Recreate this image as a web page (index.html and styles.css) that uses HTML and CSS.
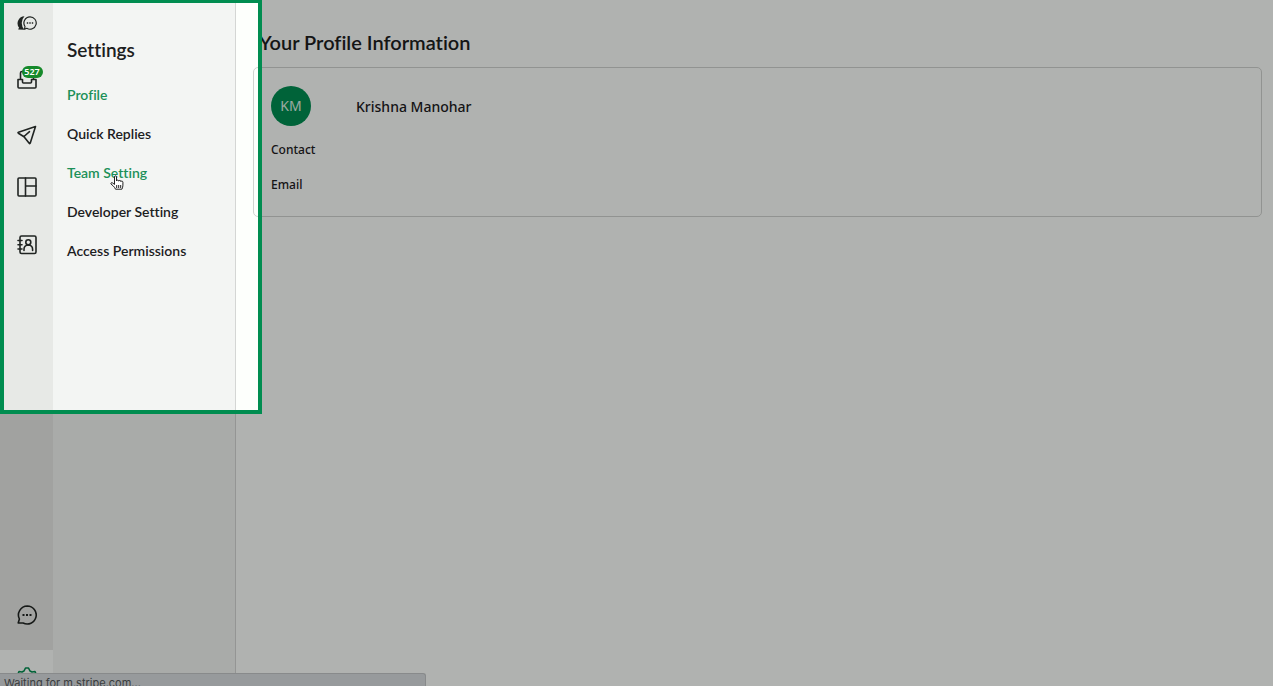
FILE: index.html
```html
<!DOCTYPE html>
<html lang="en">
<head>
<meta charset="utf-8">
<meta name="viewport" content="width=device-width, initial-scale=1">
<title>Settings</title>
<link rel="stylesheet" href="styles.css">
</head>
<body>
<div class="app">
  <nav class="rail" aria-label="Main">
    <a class="rail-link rail-logo" href="#" aria-label="Home">
      <svg class="icon" viewBox="0 0 20 20"><path d="M7.500 3.300A7 7 0 0 0 2 14.500L1.200 16.600 7.500 16.700A9.500 9.500 0 0 1 7.500 3.300Z" fill="#202422" stroke="none"/><path d="M13 3.800a6.200 6.200 0 1 1-3.200 11.500l-2.300.9.500-2.700A6.200 6.200 0 0 1 13 3.800Z" stroke-width="1.200"/><path d="M9.800 10h1.400M12.300 10h1.400M14.800 10h1.400" stroke-width="1.400" stroke-linecap="butt"/></svg>
    </a>
    <a class="rail-link rail-inbox" href="#" aria-label="Inbox">
      <svg class="icon" viewBox="0 0 20 20"><path d="M3.500 9.500V4q0-1.500 1.500-1.500h10q1.500 0 1.500 1.500v5.500M1 10.500h4.500v2.500q0 1 1 1h7q1 0 1-1v-2.500H19v7.500q0 1-1 1H2q-1 0-1-1Z"/></svg>
      <span class="badge">527</span>
    </a>
    <a class="rail-link rail-send" href="#" aria-label="Campaigns">
      <svg class="icon" viewBox="0 0 20 20"><path d="M18.500 1.500 1.500 7.200q-1 .4-.1 1l5.600 3.500L12.200 18.300q.6.700 1-.1ZM7 11.500l5.500-4.800"/></svg>
    </a>
    <a class="rail-link rail-board" href="#" aria-label="Board">
      <svg class="icon" viewBox="0 0 20 20"><rect x="1" y="1" width="18" height="18" rx="1"/><path d="M8.500 1v18M8.500 9H19"/></svg>
    </a>
    <a class="rail-link rail-contacts" href="#" aria-label="Contacts">
      <svg class="icon" viewBox="0 0 20 20"><rect x="3" y="1" width="16" height="17.500" rx="1.500"/><circle cx="11.300" cy="7.200" r="2.500"/><path d="M7 15.500v-1.300q0-3.800 4.300-4.200 4.300.4 4.300 4.200v1.300M1 5.500h4M1 9.800h4M1 14h4"/></svg>
    </a>
    <a class="rail-link rail-chat" href="#" aria-label="Chat">
      <svg class="icon" viewBox="0 0 20 20"><path d="M10.300 1a9 9 0 1 1-4.200 17H1.200l1.200-4A9 9 0 0 1 10.300 1Z"/><path d="M5.500 10h2M9 10h2M12.500 10h2" stroke-width="2" stroke-linecap="butt"/></svg>
    </a>
    <a class="rail-link rail-settings" href="#" aria-label="Settings">
      <svg class="icon" viewBox="0 0 20 20"><path d="M8.500 1h3l1.500 3 2 1 3-.5L19.500 8l-2 2 2 3-1.500 3-3-.5-2.500 1.500-1 2.500h-3L7.500 17 5 15.500l-3 .5L.5 13l2-3-2-2L2 4.500 5 5l2-1Z"/></svg>
    </a>
  </nav>

  <aside class="panel">
    <h1 class="panel-title">Settings</h1>
    <ul class="menu">
      <li><a class="menu-link active" href="#">Profile</a></li>
      <li><a class="menu-link" href="#">Quick Replies</a></li>
      <li><a class="menu-link active hovered" href="#">Team Setting
        <svg class="cursor" viewBox="0 0 14 16" aria-hidden="true"><path d="M4.500 9.500V2q0-1.200 1-1.200t1 1.200v4q.2-1 1.200-.9 1 .1 1 1.100.2-.9 1.200-.8t1 1.200q.2-.7 1-.6t1 1.200v3q0 2-1 4H5.500q-.8-2-2.500-3.500L1 9q-.5-1 .5-1.300t3 1.800Z"/><path d="M6.700 10v3M8.700 10v3M10.700 10v3"/></svg>
      </a></li>
      <li><a class="menu-link" href="#">Developer Setting</a></li>
      <li><a class="menu-link" href="#">Access Permissions</a></li>
    </ul>
  </aside>

  <main class="main">
    <h2 class="main-title">Your Profile Information</h2>
    <section class="card">
      <div class="person">
        <span class="avatar">KM</span>
        <span class="person-name">Krishna Manohar</span>
      </div>
      <p class="field">Contact</p>
      <p class="field">Email</p>
    </section>
  </main>

  <div class="status">Waiting for m.stripe.com...</div>
  <div class="spotlight"></div>
</div>
</body>
</html>
```
FILE: styles.css
```css
* {
  box-sizing: border-box;
}

body {
  margin: 0;
  background: #fdfffc;
  color: #1c201e;
  font-family: "Noto Sans", sans-serif;
  font-variant-ligatures: none;
}

.app {
  position: relative;
  display: flex;
  height: 100vh;
  overflow: hidden;
}

.rail {
  display: flex;
  flex: 0 0 53px;
  flex-direction: column;
  align-items: center;
  padding-top: 13px;
  background: #e7e9e6;
}

.rail-link {
  position: relative;
  display: block;
  flex: none;
  height: 20px;
  margin-bottom: 36px;
  color: #202422;
}

.icon {
  display: block;
  width: 20px;
  height: 20px;
  fill: none;
  stroke: currentColor;
  stroke-width: 1.6;
  stroke-linecap: round;
  stroke-linejoin: round;
}

.rail-send {
  margin-bottom: 32px;
}

.rail-board {
  margin-bottom: 38px;
}

.rail-chat {
  margin-top: auto;
  margin-bottom: 25px;
}

.rail-settings {
  display: flex;
  justify-content: center;
  width: 100%;
  height: 36px;
  margin: 0;
  padding-top: 17px;
  background: #fdfffc;
  color: #008d50;
}

.badge {
  position: absolute;
  top: -3px;
  left: 5px;
  width: 21px;
  border-radius: 6px;
  background: #15892a;
  color: #fff;
  font-size: 9px;
  font-weight: 600;
  line-height: 12px;
  text-align: center;
}

.panel {
  flex: 0 0 183px;
  padding: 37px 14px;
  border-right: 1px solid #d4d6d4;
  background: #f3f5f3;
  font-family: Lato, sans-serif;
}

.panel-title {
  margin: 0 0 26px;
  font-size: 19px;
  font-weight: 600;
  line-height: 25px;
}

.menu {
  display: grid;
  gap: 25px;
  margin: 0;
  padding: 0;
  list-style: none;
}

.menu-link {
  position: relative;
  display: block;
  color: inherit;
  font-size: 14px;
  font-weight: 600;
  line-height: 14px;
  text-decoration: none;
}

.active {
  color: #1b9058;
}

.hovered {
  cursor: pointer;
}

.cursor {
  position: absolute;
  top: 9px;
  left: 43px;
  width: 14px;
  height: 16px;
  fill: #fff;
  stroke: #222;
  stroke-width: 1;
}

.main {
  flex: 1;
  min-width: 0;
  padding: 29px 11px 30px 17px;
}

.main-title {
  margin: 0 0 12px 6px;
  font-family: Lato, sans-serif;
  font-size: 20px;
  font-weight: 600;
  line-height: 26px;
}

.card {
  padding: 18px 17px 21px;
  border: 1px solid #d0d3d0;
  border-radius: 5px;
}

.person {
  display: flex;
  align-items: center;
  gap: 45px;
  margin-bottom: 14px;
}

.avatar {
  width: 40px;
  border-radius: 50%;
  background: #008f52;
  color: #dff2e8;
  font-size: 14px;
  line-height: 40px;
  text-align: center;
}

.person-name {
  font-size: 14px;
  font-weight: 500;
}

.field {
  margin: 0 0 15px;
  font-size: 12px;
  font-weight: 500;
  line-height: 20px;
}

.field:last-child {
  margin-bottom: 0;
}

.status {
  position: absolute;
  bottom: 0;
  left: 0;
  width: 426px;
  height: 13px;
  padding: 3px 4px 0;
  border-top: 1px solid #c3c6c8;
  border-right: 1px solid #c3c6c8;
  border-radius: 0 3px 0 0;
  background: #d8dde0;
  color: #55595b;
  font-family: Inter, sans-serif;
  font-size: 11px;
  line-height: 13px;
}

.spotlight {
  position: absolute;
  top: 0;
  left: 0;
  width: 262px;
  height: 414px;
  border: 4px solid #008d50;
  border-top-width: 3px;
  box-shadow: 0 0 0 2000px rgba(0, 0, 0, 0.3);
  pointer-events: none;
}
```
